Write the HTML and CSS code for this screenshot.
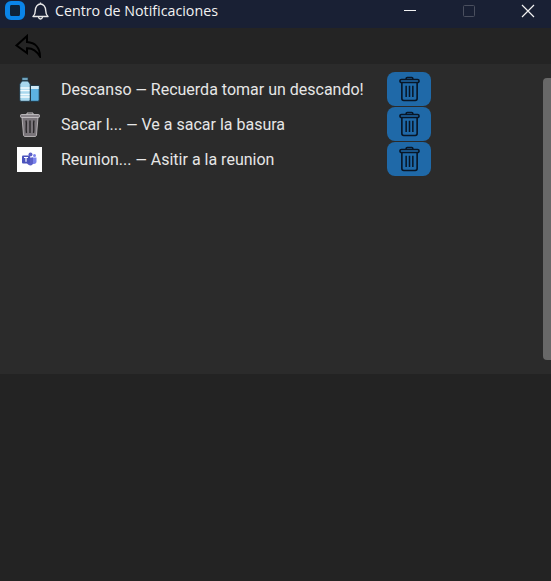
FILE: index.html
```html
<!DOCTYPE html>
<html lang="es">
<head>
  <meta charset="UTF-8" />
  <meta name="viewport" content="width=device-width, initial-scale=1" />
  <title>Centro de Notificaciones</title>
  <link rel="stylesheet" href="styles.css">
</head>
<body>
  <svg class="defs" width="0" height="0">
    <symbol id="papelera" viewBox="0 0 22 26">
      <path d="M7.500 3V2.200C7.500 1.500 8 1 8.700 1h4.600c.7 0 1.200.5 1.200 1.200V3" fill="none" stroke="currentColor" stroke-width="1.700" />
      <rect x="1" y="3" width="20" height="3.200" rx="1.600" fill="none" stroke="currentColor" stroke-width="1.700" />
      <path d="M3 6.200V23c0 1.200.8 2 2 2h12c1.200 0 2-.8 2-2V6.200" fill="none" stroke="currentColor" stroke-width="1.700" />
      <path d="M7.500 9.500V21.500M11 9.500V21.500M14.500 9.500V21.500" fill="none" stroke="currentColor" stroke-width="1.600" />
    </symbol>
  </svg>

  <div class="titlebar">
    <div class="app-logo"></div>
    <svg class="campana" width="17" height="18" viewBox="0 0 17 18">
      <path d="M1 14.500c1.700-1.500 2.300-2.800 2.300-6 0-3.500 2.300-6.500 5.200-6.500s5.200 3 5.200 6.500c0 3.200.6 4.500 2.300 6z" fill="none" stroke="#e8e8e8" stroke-width="1.400" stroke-linejoin="round" />
      <path d="M6.500 15c.2 1.300 1 2 2 2s1.800-.7 2-2" fill="none" stroke="#e8e8e8" stroke-width="1.300" />
      <path d="M8.500 .5V2" stroke="#e8e8e8" stroke-width="1.300" />
    </svg>
    <span class="titulo">Centro de Notificaciones</span>
    <div class="ventana-btns">
      <svg class="btn-ventana" width="46" height="20" viewBox="0 0 46 20">
        <path d="M17 9.500H29" stroke="#f2f2f2" stroke-width="1" />
      </svg>
      <svg class="btn-ventana" width="46" height="20" viewBox="0 0 46 20">
        <rect x="17.500" y="4.500" width="11" height="11" rx="1" fill="none" stroke="#4a4f5e" stroke-width="1" />
      </svg>
      <svg class="btn-ventana" width="46" height="20" viewBox="0 0 46 20">
        <path d="M17 4L29 16M29 4L17 16" stroke="#f2f2f2" stroke-width="1.200" />
      </svg>
    </div>
  </div>

  <div class="toolbar">
    <svg class="volver" width="28" height="24" viewBox="0 0 28 24">
      <path d="M13 2L2.500 11.500 13 19V14.200C18 14 22.500 16.500 26 22.500 26 13.500 21 8.500 13 8z" fill="none" stroke="#000" stroke-width="2" stroke-linejoin="miter" />
    </svg>
  </div>

  <div class="panel">
    <ul class="lista">
      <li class="fila">
        <div class="fila-icono">
          <svg width="21" height="25" viewBox="0 0 21 25">
            <rect x="3" y="0.500" width="6" height="3" fill="#6fa3bd" stroke="#1e3644" stroke-width=".6" />
            <path d="M.8 7L3 4h6l2.200 3V23c0 .8-.5 1.300-1.200 1.300H2C1.300 24.300 .8 23.800 .8 23z" fill="#a8d8ee" stroke="#1e3644" stroke-width=".9" />
            <path d="M1.500 11H10.500M1.500 13.500H10.500M1.500 17.500H10.500M1.500 20H10.500" stroke="#f2fafd" stroke-width="1.300" />
            <path d="M11.500 8.500H20.200V23c0 .8-.5 1.300-1.200 1.300H11.500z" fill="#5cb2e2" stroke="#1e3644" stroke-width=".9" />
            <rect x="12" y="9" width="7.700" height="3" fill="#cfe9f6" />
          </svg>
        </div>
        <span class="fila-texto">Descanso <span class="guion">—</span> Recuerda tomar un descando!</span>
        <button class="btn-borrar"><svg width="21" height="26"><use href="#papelera" /></svg></button>
      </li>
      <li class="fila">
        <div class="fila-icono">
          <svg width="20" height="25" viewBox="0 0 20 25">
            <path d="M7 2.500V1h6v1.500" fill="none" stroke="#c9c5c8" stroke-width="1" />
            <rect x="0.500" y="2.500" width="19" height="3" rx="1" fill="#8a858a" stroke="#cfcbce" stroke-width=".8" />
            <path d="M2 5.500L3.500 23c0 .8.700 1.500 1.500 1.500h10c.8 0 1.500-.7 1.500-1.500L18 5.500z" fill="#7a757a" stroke="#c9c5c8" stroke-width=".8" />
            <path d="M6 8.500C7 12 5.500 16 6.500 21M10 8.500V21M14 8.500C13 12 14.500 16 13.500 21" fill="none" stroke="#2a282a" stroke-width="1.400" />
          </svg>
        </div>
        <span class="fila-texto">Sacar l... <span class="guion">—</span> Ve a sacar la basura</span>
        <button class="btn-borrar"><svg width="21" height="26"><use href="#papelera" /></svg></button>
      </li>
      <li class="fila">
        <div class="fila-icono fila-icono-blanco">
          <svg width="15" height="14" viewBox="0 0 15 14">
            <circle cx="8.500" cy="2.500" r="2" fill="#5b5fc7" />
            <circle cx="12.500" cy="3.500" r="1.500" fill="#7b83eb" />
            <path d="M10 5.500H14.500V9.500C14.500 11 13.500 12 12 12H10z" fill="#7b83eb" />
            <path d="M5 5.500H11V11C11 12.500 10 13.500 8.500 13.500 7 13.500 5.500 12.500 5 11z" fill="#5b5fc7" />
            <rect x="0" y="3.500" width="8" height="8" rx="1" fill="#4b53bc" />
            <path d="M2 5.500H6M4 5.500V9.800" stroke="#fff" stroke-width="1.200" />
          </svg>
        </div>
        <span class="fila-texto">Reunion... <span class="guion">—</span> Asitir a la reunion</span>
        <button class="btn-borrar"><svg width="21" height="26"><use href="#papelera" /></svg></button>
      </li>
    </ul>
    <div class="scrollbar"></div>
  </div>
</body>
</html>
```

FILE: styles.css
```css
html, body {
  height: 100%;
}

body {
  margin: 0;
  background-color: #232323;
  color: #fff;
  font-family: Roboto, "Liberation Sans", sans-serif;
  overflow: hidden;
}

.defs {
  display: block;
  height: 0;
}

.titlebar {
  display: flex;
  align-items: center;
  box-sizing: border-box;
  height: 28px;
  background-color: #192034;
  padding: 0 0 7px 5px;
}

.app-logo {
  box-sizing: border-box;
  width: 20px;
  height: 19px;
  border: 5px solid #0a84e8;
  border-top-width: 4px;
  border-bottom-width: 4px;
  border-radius: 6px;
  background-color: #0e2238;
}

.campana {
  margin-left: 7px;
}

.titulo {
  margin-left: 6px;
  font-family: "Open Sans", sans-serif;
  font-size: 14.25px;
  color: #f2f2f2;
}

.ventana-btns {
  display: flex;
  margin-left: auto;
}

.btn-ventana {
  display: block;
  margin-left: 13px;
}

.toolbar {
  display: flex;
  align-items: center;
  height: 36px;
  background-color: #242424;
  padding-left: 14px;
}

.panel {
  display: flex;
  justify-content: space-between;
  height: 310px;
  background-color: #2b2b2b;
}

.lista {
  list-style: none;
  margin: 0;
  padding: 8px 0 0 17px;
}

.fila {
  display: flex;
  align-items: center;
  height: 34px;
  margin-bottom: 1px;
}

.fila-icono {
  display: flex;
  justify-content: center;
  align-items: center;
  width: 25px;
  height: 25px;
}

.fila-icono-blanco {
  background-color: #fff;
}

.fila-texto {
  width: 326px;
  margin-left: 19px;
  font-size: 16px;
  color: #e6e6e6;
  white-space: nowrap;
}

.guion {
  font-size: 14.5px;
}

.btn-borrar {
  display: flex;
  justify-content: center;
  align-items: center;
  width: 44px;
  height: 34px;
  padding: 0;
  border: none;
  border-radius: 8px;
  background-color: #1f69a8;
  color: #081626;
}

.scrollbar {
  width: 8px;
  height: 282px;
  margin-top: 14px;
  border-radius: 4px 0 0 4px;
  background-color: #686868;
}
```
